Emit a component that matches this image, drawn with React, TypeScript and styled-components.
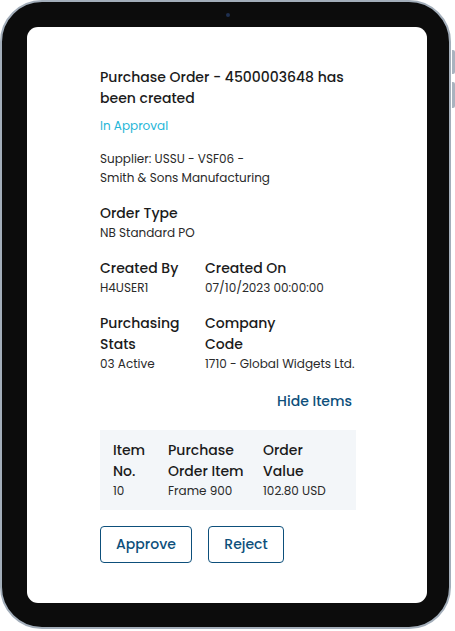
import styled, { createGlobalStyle } from 'styled-components';

const GlobalStyle = createGlobalStyle`
	html, body {
		margin: 0;
		padding: 0;
		background: #ffffff;
	}
	body {
		font-family: 'Poppins', 'Inter', 'Noto Sans', sans-serif;
		-webkit-font-smoothing: antialiased;
	}
`;

const Device = styled.div`
	position: relative;
	box-sizing: border-box;
	width: 451px;
	height: 629px;
	padding: 25px 22px 24px 25px;
	border: 2px solid #a3aeba;
	border-radius: 42px;
	background: #0c0c0c;
	display: flex;
`;

const SideButton = styled.div<{ $top: number; $height: number }>`
	position: absolute;
	right: -6px;
	top: ${(p) => p.$top}px;
	width: 3px;
	height: ${(p) => p.$height}px;
	border-radius: 0 2px 2px 0;
	background: #a9b3bf;
`;

const Camera = styled.div`
	position: absolute;
	top: 11px;
	left: 224px;
	width: 4px;
	height: 4px;
	border-radius: 50%;
	background: #1f3050;
`;

const Screen = styled.div`
	flex: 1;
	background: #ffffff;
	border-radius: 11px;
	padding: 40px 0 0 73px;
	box-sizing: border-box;
	overflow: hidden;
`;

const Content = styled.div`
	width: 256px;
	display: flex;
	flex-direction: column;
	color: #1b1b1b;
`;

const Title = styled.h1`
	margin: 0;
	font-size: 14px;
	line-height: 21px;
	font-weight: 500;
`;

const Status = styled.div`
	margin-top: 8px;
	font-size: 12px;
	line-height: 18px;
	color: #1fb6d8;
`;

const Text = styled.div<{ $mt?: number }>`
	margin-top: ${(p) => p.$mt ?? 0}px;
	font-size: 12px;
	line-height: 19px;
	color: #2a2a2a;
`;

const Field = styled.div`
	display: flex;
	flex-direction: column;
`;

const Label = styled.div`
	max-width: 90px;
	font-size: 14px;
	line-height: 21px;
	font-weight: 500;
	color: #1b1b1b;
`;

const Value = styled.div`
	font-size: 12px;
	line-height: 17px;
	color: #2a2a2a;
	white-space: nowrap;
`;

const Row = styled.div<{ $mt: number }>`
	margin-top: ${(p) => p.$mt}px;
	display: grid;
	grid-template-columns: 105px 1fr;
`;

const Block = styled.div<{ $mt: number }>`
	margin-top: ${(p) => p.$mt}px;
`;

const LinkButton = styled.button`
	margin-top: 19px;
	align-self: flex-end;
	margin-right: 4px;
	padding: 0;
	border: none;
	background: none;
	font-family: inherit;
	font-size: 14px;
	line-height: 21px;
	font-weight: 500;
	color: #0d4f7b;
	cursor: pointer;
`;

const ItemsTable = styled.div`
	margin-top: 18px;
	padding: 10px 13px 10px;
	background: #f3f6f9;
	display: grid;
	grid-template-columns: 55px 95px 1fr;
`;

const TableHead = styled.div<{ $w: number }>`
	max-width: ${(p) => p.$w}px;
	font-size: 14px;
	line-height: 21px;
	font-weight: 500;
	color: #1b1b1b;
`;

const TableCell = styled.div`
	font-size: 12px;
	line-height: 18px;
	color: #2a2a2a;
	white-space: nowrap;
`;

const Actions = styled.div`
	margin-top: 16px;
	display: flex;
	gap: 16px;
`;

const ActionButton = styled.button<{ $w: number }>`
	box-sizing: border-box;
	width: ${(p) => p.$w}px;
	height: 37px;
	border: 1.5px solid #0d4f7b;
	border-radius: 4px;
	background: #ffffff;
	font-family: inherit;
	font-size: 14px;
	font-weight: 500;
	color: #0d4f7b;
	cursor: pointer;
`;

function App() {
	return (
		<>
			<GlobalStyle />
			<Device>
				<Camera />
				<SideButton $top={48} $height={24} />
				<SideButton $top={80} $height={26} />
				<Screen>
					<Content>
						<Title>Purchase Order - 4500003648 has been created</Title>
						<Status>In Approval</Status>
						<Text $mt={14}>
							Supplier: USSU - VSF06 -
							<br />
							Smith &amp; Sons Manufacturing
						</Text>

						<Block $mt={16}>
							<Field>
								<Label>Order Type</Label>
								<Value>NB Standard PO</Value>
							</Field>
						</Block>

						<Row $mt={17}>
							<Field>
								<Label>Created By</Label>
								<Value>H4USER1</Value>
							</Field>
							<Field>
								<Label>Created On</Label>
								<Value>07/10/2023 00:00:00</Value>
							</Field>
						</Row>

						<Row $mt={17}>
							<Field>
								<Label>Purchasing Stats</Label>
								<Value>03 Active</Value>
							</Field>
							<Field>
								<Label>Company Code</Label>
								<Value>1710 - Global Widgets Ltd.</Value>
							</Field>
						</Row>

						<LinkButton>Hide Items</LinkButton>

						<ItemsTable>
							<Field>
								<TableHead $w={50}>Item No.</TableHead>
								<TableCell>10</TableCell>
							</Field>
							<Field>
								<TableHead $w={92}>Purchase Order Item</TableHead>
								<TableCell>Frame 900</TableCell>
							</Field>
							<Field>
								<TableHead $w={70}>Order Value</TableHead>
								<TableCell>102.80 USD</TableCell>
							</Field>
						</ItemsTable>

						<Actions>
							<ActionButton $w={92}>Approve</ActionButton>
							<ActionButton $w={76}>Reject</ActionButton>
						</Actions>
					</Content>
				</Screen>
			</Device>
		</>
	);
}

export default App;
